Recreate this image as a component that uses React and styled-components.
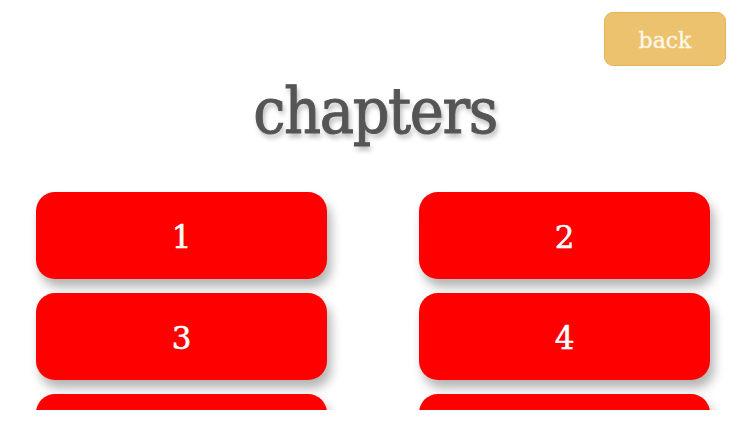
import React from 'react';
import styled, { createGlobalStyle } from 'styled-components';

const GlobalStyle = createGlobalStyle`
  html, body {
    margin: 0;
    padding: 0;
    background: #ffffff;
  }
`;

const Page = styled.div`
  width: 750px;
  height: 422px;
  display: flex;
  flex-direction: column;
  background: #fff;
  font-family: 'DejaVu Serif', 'Liberation Serif', serif;
  overflow: hidden;
`;

const TopBar = styled.div`
  height: 66px;
  box-sizing: border-box;
  display: flex;
  justify-content: flex-end;
  align-items: flex-start;
  padding: 12px 24px 0 0;
`;

const BackButton = styled.button`
  width: 122px;
  height: 54px;
  border: 1.5px solid #e2b458;
  border-radius: 9px;
  background: #ecc26e;
  color: #fff8e6;
  font-family: inherit;
  font-size: 22px;
  -webkit-text-stroke: 0.3px #fff8e6;
  padding: 3px 0 0;
  cursor: pointer;
`;

const Title = styled.h1`
  margin: 0;
  height: 90px;
  padding-bottom: 24px;
  line-height: 90px;
  text-align: center;
  font-family: 'DejaVu Serif Condensed', 'DejaVu Serif', serif;
  font-stretch: condensed;
  font-weight: normal;
  font-size: 64px;
  letter-spacing: -1.4px;
  color: #555555;
  -webkit-text-stroke: 1px #555555;
  text-shadow: 2px 4px 5px rgba(0, 0, 0, 0.3);
`;

const List = styled.div`
  flex: 1;
  overflow: hidden;
  margin-bottom: 12px;
`;

const Grid = styled.div`
  display: grid;
  grid-template-columns: 291px 291px;
  column-gap: 92px;
  row-gap: 14px;
  padding: 12px 0 0 36px;
`;

const ChapterButton = styled.button`
  height: 87px;
  border: none;
  border-radius: 19px;
  background: #ff0000;
  color: #ffffff;
  font-family: inherit;
  font-size: 31px;
  -webkit-text-stroke: 0.5px #ffffff;
  padding: 3px 0 0;
  box-shadow: 4px 8px 11px rgba(0, 0, 0, 0.3);
  cursor: pointer;
`;

const chapters = [1, 2, 3, 4, 5, 6];

export default function App() {
  return (
    <Page>
      <GlobalStyle />
      <TopBar>
        <BackButton>back</BackButton>
      </TopBar>
      <Title>chapters</Title>
      <List>
        <Grid>
          {chapters.map((n) => (
            <ChapterButton key={n}>{n}</ChapterButton>
          ))}
        </Grid>
      </List>
    </Page>
  );
}
